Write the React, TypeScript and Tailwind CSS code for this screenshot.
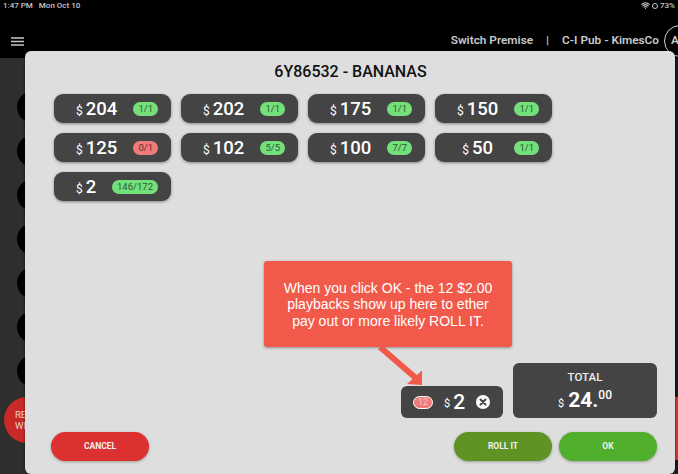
import { Wifi } from "lucide-react";

const bets = [
  { amount: "204", count: "1/1" },
  { amount: "202", count: "1/1" },
  { amount: "175", count: "1/1" },
  { amount: "150", count: "1/1" },
  { amount: "125", count: "0/1", empty: true },
  { amount: "102", count: "5/5" },
  { amount: "100", count: "7/7" },
  { amount: "50", count: "1/1" },
  { amount: "2", count: "146/172" },
];

const BetButton = ({ amount, count, empty }: { amount: string; count: string; empty?: boolean }) => (
  <div className="h-[29px] rounded-[9px] bg-[#444444] shadow-[0_1px_3px_rgba(0,0,0,0.4)] flex items-center pl-[6px] pr-[13px] text-white">
    <div className="flex-1 flex items-baseline justify-center pt-[2px]">
      <span className="text-[12px] leading-none mr-[3px]">$</span>
      <span className="text-[18.5px] font-medium leading-none">{amount}</span>
    </div>
    <span
      className={`h-[14px] px-[5px] rounded-full text-[9.5px] leading-[14px] ${
        empty ? "bg-[#ef7b7b] text-[#6b2b2b]" : "bg-[#74e07a] text-[#2c5c32]"
      }`}
    >
      {count}
    </span>
  </div>
);

const ActionButton = ({ label, className }: { label: string; className: string }) => (
  <button className={`h-[29px] w-[98px] rounded-full text-[8.5px] font-bold text-[#f2f2f2] shadow-[0_1px_3px_rgba(0,0,0,0.3)] ${className}`}>
    {label}
  </button>
);

export default function App() {
  return (
    <div className="relative w-[678px] h-[474px] bg-black overflow-hidden flex flex-col font-['Roboto',sans-serif]">
      {/* status bar + app header */}
      <div className="h-[58px] shrink-0 flex flex-col">
        <div className="h-[11px] px-[3px] text-[8px] leading-[11px] text-[#c8c8c8] flex justify-between">
          <span className="font-medium">
            1:47 PM<span className="ml-[6px]">Mon Oct 10</span>
          </span>
          <span className="flex items-center gap-[2px] font-medium">
            <Wifi size={9} strokeWidth={3} />
            <span className="w-[6px] h-[6px] rounded-full border border-[#c8c8c8]" />
            73%
          </span>
        </div>
        <div className="flex items-center justify-between mt-[14px] pl-[11px] -mr-[18px]">
          <svg viewBox="0 0 13 9" className="w-[13px] h-[9px]">
            <path d="M0 1H13M0 4.5H13M0 8H13" stroke="#c8c8c8" strokeWidth="1.5" />
          </svg>
          <div className="flex items-center text-[11.8px] font-semibold text-[#c8c8c8]">
            <span>Switch Premise</span>
            <span className="mx-[13px]">|</span>
            <span>C-I Pub - KimesCo</span>
            <span className="ml-[5px] w-[32px] h-[32px] rounded-full border border-[#d0d0d0] flex items-center justify-center pr-[10px]">
              A
            </span>
          </div>
        </div>
      </div>

      {/* page behind the dialog */}
      <div className="flex-1 bg-[#2e2e2e] flex justify-between">
        <div className="flex flex-col items-start pl-[17px] pt-[33px] gap-[12px]">
          {[0, 1, 2, 3, 4, 5, 6].map((i) => (
            <div key={i} className="w-[32px] h-[32px] rounded-full bg-black" />
          ))}
          <div className="-ml-[13px] -mt-[2px] w-[46px] h-[46px] rounded-full bg-[#c92a26] text-[9.5px] leading-[11px] text-[#f0d0d0] pl-[11px] pt-[12px]">
            RE
            <br />
            WI
          </div>
        </div>
        <div className="w-[3px] bg-[#1a1a1a] flex flex-col justify-end pb-[14px]">
          <div className="h-[63px] bg-[#d43a30]" />
        </div>
      </div>

      {/* dialog */}
      <div className="absolute left-[25px] top-[51px] w-[650px] h-[423px] bg-[#dedede] rounded-[6px] shadow-[0_0_3px_rgba(0,0,0,0.6)] flex flex-col pl-[29px] pr-[18px]">
        <h1 className="text-center text-[16px] leading-[18px] font-medium text-[#111111] pt-[12px] mr-[10px]">6Y86532 - BANANAS</h1>
        <div className="grid grid-cols-[repeat(4,117px)] gap-x-[10px] gap-y-[10px] mt-[13px]">
          {bets.map((b) => (
            <BetButton key={b.amount} {...b} />
          ))}
        </div>

        <div className="mt-auto flex justify-end items-end gap-[10px]">
          <div className="h-[32px] w-[102px] rounded-[6px] bg-[#444444] text-white flex items-center pl-[12px]">
            <span className="h-[13px] w-[20px] rounded-full bg-[#ef7b7b] border border-white text-[9px] leading-[11px] text-center text-[#f5c5c5]">12</span>
            <span className="text-[11px] leading-none ml-[11px] mr-[3px] mt-[3px]">$</span>
            <span className="text-[21px] font-medium leading-none">2</span>
            <svg viewBox="0 0 14 14" className="w-[14px] h-[14px] ml-[11px]">
              <circle cx="7" cy="7" r="7" fill="#ffffff" />
              <path d="M4.5 4.5 9.5 9.5M9.5 4.5 4.5 9.5" stroke="#444444" strokeWidth="2" strokeLinecap="round" />
            </svg>
          </div>
          <div className="h-[55px] w-[144px] rounded-[6px] bg-[#444444] text-white flex flex-col items-center pt-[7px]">
            <span className="text-[11.5px] leading-[14px] font-medium text-[#eeeeee]">TOTAL</span>
            <div className="flex items-start mt-[3px]">
              <span className="text-[11px] mt-[9px] mr-[4px]">$</span>
              <span className="text-[21px] leading-[26px] font-bold">24.</span>
              <span className="text-[12px] leading-[16px] font-medium">00</span>
            </div>
          </div>
        </div>

        <div className="flex items-center mt-[14px] mb-[13px]">
          <ActionButton label="CANCEL" className="ml-[-3px] bg-[#dd3030]" />
          <div className="ml-auto flex gap-[7px]">
            <ActionButton label="ROLL IT" className="bg-[#5f9323]" />
            <ActionButton label="OK" className="bg-[#4fae2b]" />
          </div>
        </div>

        {/* annotation over the dialog */}
        <div className="absolute left-[239px] top-[210px] w-[248px] h-[86px] bg-[#f15a4a] rounded-[3px] shadow-[0_1px_3px_rgba(0,0,0,0.35)] flex items-center justify-center text-center text-white text-[14px] leading-[16.5px] font-['Liberation_Sans',sans-serif] px-[18px] pt-[1px]">
          When you click OK - the 12 $2.00 playbacks show up here to ether pay out or more likely ROLL IT.
        </div>
        <svg className="absolute left-[345px] top-[294px] w-[60px] h-[44px]" viewBox="0 0 60 44">
          <path d="M10 2 47 34" stroke="#f15a4a" strokeWidth="6" fill="none" />
          <path d="M52 40 52 25.5 37 39Z" fill="#f15a4a" />
        </svg>
      </div>
    </div>
  );
}
